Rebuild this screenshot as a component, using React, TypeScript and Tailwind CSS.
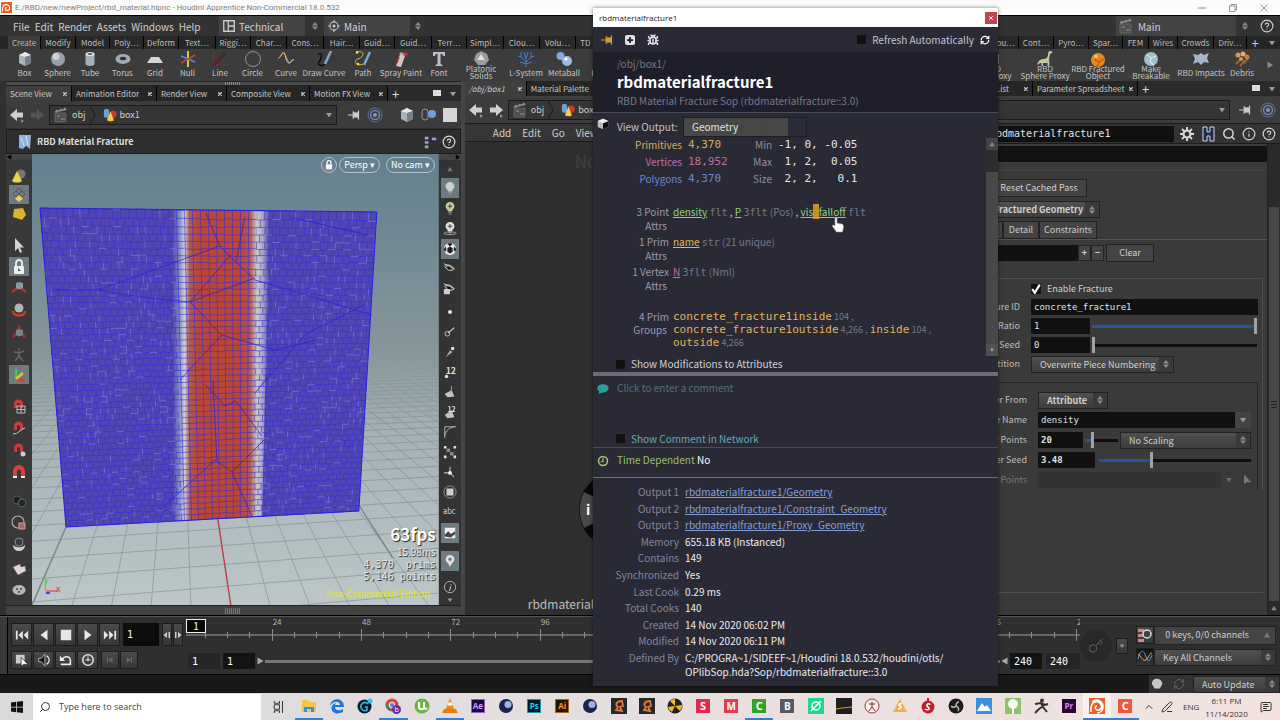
import React, { useState } from "react";
import type { ReactNode } from "react";
import { RefreshCw, Info, Key, Search, Bug, ChevronUp, CircleHelp, MessageSquareText, PenLine } from "lucide-react";

const UI = "font-['Noto_Sans_CJK_SC','Open_Sans',sans-serif]";
const MONO = "font-['DejaVu_Sans_Mono','Liberation_Mono',monospace]";
const WIN = "font-['Open_Sans','Noto_Sans',sans-serif]";

type P = { children?: ReactNode; className?: string };

function Ico({ children, className = "size-4" }: P) {
  return (
    <svg viewBox="0 0 16 16" className={`shrink-0 ${className}`} fill="none" aria-hidden="true">
      {children}
    </svg>
  );
}

/* ---------- shared glyphs ---------- */
const Spin = () => (
  <Ico className="h-3 w-2">
    <path d="M8 0l6 7H2zM8 16l6-7H2z" fill="#8a8a8a" />
  </Ico>
);
const Down = ({ className = "size-2" }: P) => (
  <Ico className={className}>
    <path d="M2 4h12l-6 9z" fill="#9a9a9a" />
  </Ico>
);
const PinIcon = ({ className = "h-3 w-3.5" }: P) => (
  <Ico className={className}>
    <path d="M0 8h7M7 3v10M7 5.500h6M7 10.500h6M14 2v12" stroke="currentColor" strokeWidth="1.600" />
    <path d="M7 5h7v6H7z" fill="currentColor" />
  </Ico>
);
const Rings = () => (
  <Ico className="size-4">
    <circle cx="8" cy="8" r="7" stroke="#5f7299" />
    <circle cx="8" cy="8" r="4.500" stroke="#6e83b0" strokeWidth="1.500" />
    <circle cx="8" cy="8" r="2" fill="#7d95c8" />
  </Ico>
);
const Gear = () => (
  <Ico className="size-3.5">
    <circle cx="8" cy="8" r="4" stroke="#d8d8d8" strokeWidth="2.500" />
    <path d="M8 0v4M8 12v4M0 8h4M12 8h4M2.300 2.300l3 3M10.700 10.700l3 3M2.300 13.700l3-3M10.700 5.300l3-3" stroke="#d8d8d8" strokeWidth="2.200" />
  </Ico>
);
const Clapper = () => (
  <Ico className="size-4">
    <path d="M2 6h11v9H2z" fill="#4c5050" stroke="#777" strokeWidth=".6" />
    <path d="M2 5l11-3M3 3l2 2M7 2l2 2M11 1l2 2" stroke="#8a8f8f" strokeWidth="1.500" />
    <path d="M4 9h3M8 12h4" stroke="#999" />
  </Ico>
);
const Shapes = () => (
  <Ico className="size-3.5">
    <rect x="1" y="1" width="6" height="10" rx="2" fill="#6f9fd4" />
    <circle cx="11.500" cy="7" r="4.200" fill="#c8372c" />
    <path d="M8.500 4l4 10c-2 1.500-6 1.500-8 0z" fill="#f2cf45" />
  </Ico>
);
const Arrow = ({ flip = false, dim = false }: { flip?: boolean; dim?: boolean }) => (
  <Ico className="size-4">
    <path d={flip ? "M15 8L8 2v3.500H2v5h6V14z" : "M1 8l7-6v3.500h6v5H8V14z"} fill={dim ? "#555" : "#d0d0d0"} />
    {!dim && <path d="M12 12l3 2-3 2z" fill="#888" />}
  </Ico>
);

/* ---------- shelf ---------- */
const tabsLeft: [string, string][] = [
  ["Create", "w-[33px]"], ["Modify", "w-[35px]"], ["Model", "w-[34px]"], ["Poly…", "w-[34px]"], ["Deform", "w-[35px]"],
  ["Text…", "w-[37px]"], ["Riggi…", "w-[35px]"], ["Char…", "w-[36px]"], ["Cons…", "w-[37px]"], ["Hair…", "w-[36px]"],
  ["Guid…", "w-[35px]"], ["Guid…", "w-[37px]"], ["Terr…", "w-[35px]"], ["Simpl…", "w-[37px]"], ["Clou…", "w-[36px]"],
  ["Volu…", "w-[36px]"], ["TD …", "w-[30px]"],
];
const tabsRight: [string, string][] = [
  ["Grou…", "w-[34px]"], ["Cont…", "w-[35px]"], ["Pyro…", "w-[35px]"], ["Spar…", "w-[34px]"], ["FEM", "w-[26px]"], ["Wires", "w-[29px]"],
  ["Crowds", "w-[36px]"], ["Driv…", "w-[33px]"],
];

const G = {
  box: <><path d="M2 4l6-3 6 3v8l-6 3-6-3z" fill="#a9b2bd" /><path d="M2 4l6 2 6-2-6-3z" fill="#e4e8ec" /><path d="M8 6l6-2v8l-6 3z" fill="#76808c" /></>,
  sphere: <><circle cx="8" cy="8" r="7" fill="#98a0aa" /><circle cx="6" cy="5.500" r="3.500" fill="#d8dde2" opacity=".8" /></>,
  tube: <><path d="M3.500 3v10c0 2.500 9 2.500 9 0V3z" fill="#a4afbb" /><ellipse cx="8" cy="3" rx="4.500" ry="2" fill="#dfe5ea" /><ellipse cx="8" cy="3" rx="2.500" ry="1" fill="#59616b" /></>,
  torus: <><ellipse cx="8" cy="8" rx="7.500" ry="5" fill="#a0aab6" /><ellipse cx="8" cy="7.500" rx="3.200" ry="1.700" fill="#2f3338" /></>,
  grid: <path d="M4 6h8l4 6H0z" fill="#d3d8dc" />,
  nul: <><path d="M8 0v16" stroke="#d8c83a" strokeWidth="2" /><path d="M1 5l14 6" stroke="#4d8fe0" strokeWidth="1.500" /><path d="M1 12l14-8" stroke="#d23c34" strokeWidth="1.500" /></>,
  line: <><path d="M2 0v14h14M2 14L16 8" stroke="#7d2f35" /><path d="M2 14L13 2" stroke="#111" strokeWidth="2" /><path d="M2 14L13 2" stroke="#c44" strokeWidth=".8" /></>,
  circle: <circle cx="8" cy="8" r="7.500" stroke="#8492aa" />,
  curve: <><path d="M0 8c4-3 4-8 6-6s2 10 5 10 2-4 5-3" stroke="#e2e2e2" /><path d="M0 8L6 1l5 11 4-4" stroke="#d6903c" strokeWidth=".8" /></>,
  draw: <><path d="M2 3c6-2 3 5 1 8s3 5 6 2" stroke="#0c0c0c" strokeWidth="1.500" /><path d="M15 0L9 13" stroke="#7fa5d8" strokeWidth="2.500" /></>,
  path: <><path d="M1 1c10-2 8 5 2 7s-1 8 5 5" stroke="#d6c12f" /><circle cx="2" cy="1.500" r="1.300" fill="#ffe22e" /><circle cx="3" cy="13" r="1.300" fill="#ffe22e" /><path d="M15 1L9 14" stroke="#7fa5d8" strokeWidth="2.500" /></>,
  spray: <><path d="M3 15L7 3l5 2-4 11z" fill="#d8c3c0" /><path d="M6 3l2-2 4 2v2z" fill="#aaa" /><circle cx="13" cy="3" r="2" fill="#c4262a" /><path d="M4 12l2-6" stroke="#b33" strokeWidth="1.500" /></>,
  font: <path d="M2 1h12v4h-2c0-2-1-2-2.500-2v10l2 1v1h-7v-1l2-1V3C5 3 4 3 4 5H2z" fill="#b9bfc6" />,
  plat: <><path d="M8 0l6 3 2 6-4 5H5L1 9l2-6z" fill="#9b9b9b" /><path d="M8 3l4 6H4z" fill="#ddd" /></>,
  lsys: <path d="M8 16V8M8 11L3 6M8 11l5-5M8 8L6 1M8 8l2-7M3 6L0 5M3 6l0-5M13 6l3-1M13 6V1M8 13l-6-2M8 13l6-2" stroke="#3f7fd0" />,
  meta: <><circle cx="4.500" cy="5" r="4" fill="#86a9dc" /><circle cx="11" cy="10" r="5" fill="#9bbcea" /><circle cx="10" cy="8" r="1.500" fill="#fff" /></>,
  file: <path d="M3 2h8l3 12H4z" fill="#d9b98f" />,
  dino: <path d="M13 0c2 0 3 1 2 2l-2 1-1 6c1 3 0 6 0 6h-1.500v-3H6V15H4.500v-3C2 12 1 14 0 14c1-4 3-6 6-6s5-1 5-5c0-2 1-3 2-3z" fill="#b9c99c" />,
  orange: <><circle cx="8" cy="9" r="7" fill="#e8861d" /><path d="M8 4L5 9l4 2-2 5M9 11l5-3" stroke="#8e4a08" strokeWidth=".8" /><circle cx="6" cy="5.500" r="2" fill="#f8be6c" /></>,
  breakable: <><circle cx="8" cy="8" r="7" fill="#9fc0cb" /><path d="M4 4l4 3-1 4 4 3M8 7l5-2" stroke="#dff2f5" /></>,
  impacts: <path d="M0 3l5 1 3-2 3 2 5-2-2 5 2 5-5-1-3 3-3-3-5 2 2-5z" fill="#a8b5cf" />,
  debris: <><path d="M2 13l5-5M6 15l5-6M10 13l4-6" stroke="#9a6230" strokeWidth="2" /><circle cx="4" cy="4" r="2.500" fill="#d99a50" /><circle cx="9" cy="3" r="2.500" fill="#e3aa66" /><circle cx="13" cy="6" r="2.500" fill="#c4813c" /><circle cx="7" cy="8" r="2" fill="#d99a50" /></>,
};
const toolsLeft: [string, string, ReactNode][] = [
  ["Box", "w-[33px]", G.box], ["Sphere", "w-[33px]", G.sphere], ["Tube", "w-[32px]", G.tube], ["Torus", "w-[33px]", G.torus],
  ["Grid", "w-[32px]", G.grid], ["Null", "w-[33px]", G.nul], ["Line", "w-[32px]", G.line], ["Circle", "w-[33px]", G.circle],
  ["Curve", "w-[34px]", G.curve], ["Draw Curve", "w-[42px]", G.draw], ["Path", "w-[36px]", G.path], ["Spray Paint", "w-[40px]", G.spray],
  ["Font", "w-[36px]", G.font], ["Platonic Solids", "w-[48px]", G.plat], ["L-System", "w-[42px]", G.lsys], ["Metaball", "w-[34px]", G.meta],
  ["File", "w-[34px]", G.file],
];
const toolsRight: [string, string, ReactNode][] = [
  ["RBD Box Proxy", "w-[50px]", G.box], ["RBD Sphere Proxy", "w-[54px]", G.dino], ["RBD Fractured Object", "w-[52px]", G.orange],
  ["Make Breakable", "w-[54px]", G.breakable], ["RBD Impacts", "w-[46px]", G.impacts], ["Debris", "w-[36px]", G.debris],
];
const twoLine: Record<string, [string, string]> = {
  "Platonic Solids": ["Platonic", "Solids"], "RBD Box Proxy": ["RBD", "Box Proxy"], "RBD Sphere Proxy": ["RBD", "Sphere Proxy"],
  "RBD Fractured Object": ["RBD Fractured", "Object"], "Make Breakable": ["Make", "Breakable"],
};

function Tool({ item: [name, w, glyph] }: { item: [string, string, ReactNode] }) {
  const two = twoLine[name];
  return (
    <button className={`flex h-8 shrink-0 flex-col items-center whitespace-nowrap text-[8px] leading-[7px] text-[#c4c4c4] ${w}`}>
      <Ico className="mt-0.5 size-4">{glyph}</Ico>
      {two ? <span className="-mt-0.5">{two[0]}<br />{two[1]}</span> : <span className="mt-0.5">{name}</span>}
    </button>
  );
}

function ShelfTab({ item: [name, w], on }: { item: [string, string]; on?: boolean }) {
  return (
    <button className={`h-[13px] shrink-0 overflow-hidden whitespace-nowrap border-r border-black text-[8px] leading-[12px] ${w} ${on ? "bg-[#3c3c3c] text-[#bbb]" : "bg-[#282828] text-[#bcbcbc]"}`}>
      {name}
    </button>
  );
}

function PaneTab({ name, w, on, italic }: { name: string; w: string; on?: boolean; italic?: boolean }) {
  return (
    <div className={`flex h-[15px] shrink-0 items-center justify-between border-r border-black px-1 ${w} ${on ? "bg-[#3f3f3f]" : "bg-[#262626]"}`}>
      <button className={`whitespace-nowrap text-[8px] leading-[14px] text-[#c8c8c8] ${italic ? "italic" : ""}`}>{name}</button>
      <button aria-label={`Close ${name}`}><Ico className="size-1"><path d="M1 1l14 14M15 1L1 15" stroke="#ccc" strokeWidth="5" /></Ico></button>
    </div>
  );
}

/* ---------- viewport drawing ---------- */
function rng(seed: number) {
  let s = seed;
  return () => ((s = (s * 16807) % 2147483647) / 2147483647);
}
const lerp = (a: number, b: number, t: number) => a + (b - a) * t;
function wallPoint(u: number, v: number) {
  const vv = Math.pow(v, 0.9);
  return [lerp(lerp(40, 377, u), lerp(66, 359, u), vv), lerp(lerp(208, 212, u), lerp(527, 511, u), vv)];
}
function seg(u1: number, v1: number, u2: number, v2: number) {
  const [a, b] = wallPoint(u1, v1);
  const [c, d] = wallPoint(u2, v2);
  return `M${a.toFixed(1)} ${b.toFixed(1)}L${c.toFixed(1)} ${d.toFixed(1)}`;
}
function buildWall() {
  const r = rng(41);
  let dark = "";
  let light = "";
  const rows = 50;
  const cols = 42;
  for (let j = 0; j <= rows; j++) {
    for (let i = 0; i < cols; i++) {
      const inRed = i > 16 && i < 27;
      const v = Math.min(1, Math.max(0, j / rows + (r() - 0.5) * 0.003));
      const line = seg(i / cols, v, (i + 1) / cols, v);
      if (!inRed && r() < 0.15) light += line;
      else dark += line;
      if (j < rows) {
        const off = inRed ? 0 : (j % 2) * 0.5 + (r() - 0.5) * 0.2;
        const u = Math.max(0, (i + off) / cols);
        const vert = seg(u, v, u, Math.min(1, v + 1 / rows));
        if (!inRed && r() < 0.2) light += vert;
        else dark += vert;
      }
    }
  }
  return { dark, light };
}
const wall = buildWall();
const floor = (() => {
  let d = "";
  for (let k = -22; k < 44; k++) {
    const s = (9 + 30 * k) / 256;
    d += `M${(179 + s * 62).toFixed(1)} 329L${(179 + s * 340).toFixed(1)} 607`;
  }
  for (let n = -4; n < 48; n++) {
    const h = 1 / (0.003425 + 0.00022 * n);
    d += `M32 ${(267 + h).toFixed(1)}L445 ${(267 + h - h * 0.1).toFixed(1)}`;
  }
  return d;
})();

function Scene() {
  return (
    <svg viewBox="32 154 407 451" preserveAspectRatio="none" className="absolute inset-0 size-full" aria-hidden="true">
      <defs>
        <linearGradient id="sky" x1="0" y1="0" x2="0" y2="1">
          <stop offset="0" stopColor="#637f8e" /><stop offset=".25" stopColor="#768c95" /><stop offset=".42" stopColor="#85969b" />
          <stop offset=".62" stopColor="#a5b2b5" /><stop offset="1" stopColor="#bdc7ca" />
        </linearGradient>
        <linearGradient id="band" gradientUnits="userSpaceOnUse" x1="172" y1="0" x2="270" y2="0">
          <stop offset="0" stopColor="#4b41a4" /><stop offset=".07" stopColor="#7f86bd" /><stop offset=".13" stopColor="#cfcfd4" />
          <stop offset=".18" stopColor="#b05a50" /><stop offset=".28" stopColor="#bb4632" /><stop offset=".7" stopColor="#bb4632" />
          <stop offset=".8" stopColor="#b05a5a" /><stop offset=".87" stopColor="#cfcbc2" /><stop offset=".93" stopColor="#a5a4c2" /><stop offset="1" stopColor="#4b41a4" />
        </linearGradient>
        <linearGradient id="fade" x1="0" y1="0" x2="0" y2="1">
          <stop offset=".38" stopColor="#fff" stopOpacity="0" /><stop offset=".6" stopColor="#fff" />
        </linearGradient>
        <mask id="floorMask"><rect x="32" y="154" width="407" height="451" fill="url(#fade)" /></mask>
      </defs>
      <rect x="32" y="154" width="407" height="451" fill="url(#sky)" />
      <path d={floor} stroke="#7d898d" strokeWidth=".8" fill="none" opacity=".75" mask="url(#floorMask)" />
      <path d="M66 527L31 607M359 505L393 558" stroke="#7d8688" strokeWidth="1.400" />
      <path d="M218 519L231 605" stroke="#c8343c" strokeWidth="1.200" />
      <path d="M40 208L377 212L359 511L66 527Z" fill="#5046ae" />
      <path d="M172 209.500L270 211L262 516.500L174 521Z" fill="url(#band)" />
      <path d={wall.dark} stroke="#3029e2" strokeWidth=".8" opacity=".7" fill="none" />
      <path d={wall.light} stroke="#7d76f6" strokeWidth=".8" opacity=".8" fill="none" />
      <g stroke="#2a22d0" strokeWidth=".9" fill="none" opacity=".85">
        <path d="M206 213l14 33 16 16 19 18 35 10 82 25M220 246L98 290H48M98 290l42 7 50 5 40-46M190 302l32 33 53 15 42-10M190 302l65-24M222 335l-42 45" />
        <path d="M205 384l20 22 11-5 26 35M264 440l-32 32-17-12-55 50M232 472l20 44M290 217l78 18M245 217l-9 45M213 380l4 80M366 304l-60 30-52 60" />
      </g>
      <path d="M40 208L377 212L359 511L66 527Z" fill="none" stroke="#2420e8" />
      <path d="M45.500 590v-11" stroke="#3adf3a" /><path d="M46 591h11" stroke="#e03030" /><path d="M46 593h4" stroke="#2828c8" strokeWidth="1.500" />
    </svg>
  );
}

/* ---------- toolbars ---------- */
const magnet = <path d="M3 10V6a4.500 4.500 0 019 0v4H9V6.500a1.500 1.500 0 00-3 0V10z" fill="#cf3a3a" />;
const leftTools: [string, ReactNode, boolean, string][] = [
  ["Select objects", <><circle cx="10" cy="6" r="4.500" fill="#777" /><path d="M6 3l5 10c-2 2-8 2-10 0z" fill="#ead054" /></>, false, "mt-[6px]"],
  ["Select primitives", <><path d="M8 1l6 6-6 6-6-6zM5 4l6 6M11 4l-6 6" stroke="#555" /><path d="M8 8l4 3.500L8 15l-4-3.500z" fill="#efcf5e" /></>, true, ""],
  ["Select geometry", <path d="M3 3l9-1 3 7-4 5-9-3z" fill="#d8b52b" />, false, ""],
  ["Select", <path d="M4 1v13l3-3 2 5 2-1-2-4.500h4z" fill="#d4d4d4" />, false, "mt-3"],
  ["Secure selection", <><rect x="3" y="7" width="10" height="8" rx="1" fill="#f0f0f0" /><path d="M5 8V4a3 3 0 016 0v4" stroke="#f0f0f0" strokeWidth="1.800" /><path d="M7 9l3 3H7z" fill="#555" /></>, true, "mt-[3px]"],
  ["Move", <><path d="M8 7L1 12M8 7l7 5M8 7V3" stroke="#bf3030" strokeWidth="2.500" /><path d="M5 3l3-1 4 1v5L8 9.500 5 8z" fill="#8a9aa4" /></>, false, "mt-[2px]"],
  ["Rotate", <><path d="M2 9c0 6 12 6 12 0" stroke="#c9431f" strokeWidth="2.500" /><circle cx="8" cy="6" r="4.500" fill="#aeb4b8" /></>, false, "mt-[3px]"],
  ["Scale", <><path d="M8 7L2 13M8 7l6 6M8 7V1" stroke="#b52c2c" strokeWidth="2.500" /><path d="M5 6l3-1 4 1v5l-4 1.500L5 11z" fill="#77848c" /></>, false, "mt-[3px]"],
  ["Pose", <path d="M8 5v5l-4 5M8 10l4 5M3 6l5 1 5-2M8 2v2" stroke="#666" strokeWidth="1.600" />, false, "mt-[3px]"],
  ["Handles", <><path d="M5 12V2" stroke="#58c23c" strokeWidth="2.500" /><path d="M5 12l9 2" stroke="#d6402e" strokeWidth="2.500" /><path d="M5 12l7-6" stroke="#e8bd37" strokeWidth="2.500" /></>, true, "mt-[2px]"],
  ["Snap grid", <>{magnet}<path d="M6 8h8v7H6zM10 8v7M6 11.500h8" stroke="#bbb" /></>, false, "mt-3"],
  ["Snap curve", <>{magnet}<path d="M2 14c6 0 6-4 12-6" stroke="#ccc" /></>, false, "mt-[3px]"],
  ["Snap point", <>{magnet}<circle cx="12" cy="12" r="2.500" fill="#ccc" /></>, false, "mt-[3px]"],
  ["Snap", <><path d="M2 14V7a6 6 0 0112 0v7h-4V7.500a2 2 0 00-4 0V14z" fill="#d64040" /><path d="M2 12h4v2H2zM10 12h4v2h-4z" fill="#eee" /></>, false, "mt-[3px]"],
  ["Construction plane", <><circle cx="6" cy="7" r="4" fill="#1a1d1e" stroke="#4f5a5e" /><circle cx="11" cy="10" r="4" fill="#23272a" stroke="#5b666a" /></>, false, "mt-[10px]"],
  ["Reference", <><circle cx="7" cy="7" r="6" stroke="#aaa" strokeWidth="1.200" /><path d="M8 8h6v6H8z" fill="#a66" stroke="#d99" /></>, false, "mt-[3px]"],
  ["Snapshot", <><circle cx="8" cy="5" r="4" fill="#333c40" stroke="#889" /><path d="M2 8c0 8 12 8 12 0-3 3-9 3-12 0z" fill="#c8d2d6" /></>, false, "mt-[3px]"],
  ["Flipbook", <path d="M2 5l7-3 1 3 4-1 1 5-8 4-2-3z" fill="#d8d8d8" stroke="#a44" strokeWidth=".5" />, false, "mt-[6px]"],
  ["Render", <><ellipse cx="8" cy="7" rx="6.500" ry="5" fill="#b7b7b7" /><circle cx="6" cy="6" r="1" fill="#444" /><circle cx="10" cy="6" r="1" fill="#444" /><circle cx="8" cy="9" r="1" fill="#444" /></>, false, "mt-[2px]"],
];
const bulb = (c: string) => <><path d="M8 1a5 5 0 00-3 9l.8 2h4.400L11 10a5 5 0 00-3-9z" fill={c} /><path d="M6 13h4M6.500 15h3" stroke="#999" /></>;
const eye = <><path d="M2 5c3-3 7-2 11 3-4 3-8 2-11-3z" fill="#555" stroke="#ccc" /><circle cx="7" cy="6.500" r="2" fill="#111" /><path d="M1 2l11 5" stroke="#ddd" /></>;
const rightTools: [string, ReactNode, boolean, string][] = [
  ["Default lighting", bulb("#c9d0d2"), true, "mt-[6px]"],
  ["Normal lighting", <>{bulb("#c3cc94")}<path d="M8 3.500v5M5.500 6h5" stroke="#333" /></>, false, ""],
  ["High quality lighting", <>{bulb("#dfe4d8")}<path d="M8 3.500v5M5.500 6h5" stroke="#333" /><ellipse cx="8" cy="14" rx="7" ry="1.500" stroke="#aaa" /></>, false, ""],
  ["Materials", <><circle cx="8" cy="8" r="7" fill="#e4e4e4" /><path d="M8 5l3 2v4l-3 2-3-2V7zM8 1l3 1-3 3-3-3zM1 8l2-3 1 4-2 2zM15 8l-2-3-1 4 2 2z" fill="#1e1e1e" /></>, true, "mt-px"],
  ["Display options", eye, false, ""],
  ["Lock display", <>{eye}<rect x="1" y="8" width="7" height="6" rx="1" fill="#ccc" /></>, false, ""],
  ["Points", <circle cx="8" cy="8" r="2.300" fill="#e2e2e2" />, false, "mt-[3px]"],
  ["Point normals", <><circle cx="5" cy="10" r="2.700" stroke="#ccc" /><path d="M6 9l7-6" stroke="#ddd" strokeWidth="1.300" /></>, false, ""],
  ["Point trails", <><circle cx="11" cy="4" r="2" fill="#ddd" /><path d="M3 14l5-8 3 2z" fill="#aaa" /></>, false, ""],
  ["Point numbers", <><text x="3" y="10" fontSize="10" fontWeight="bold" fill="#ddd">12</text><circle cx="4" cy="13" r="2" fill="#ddd" /></>, false, ""],
  ["Primitive normals", <><path d="M2 10l8-4 3 7-8 1z" fill="#c4c4c4" /><path d="M9 9l1-8" stroke="#aaa" /></>, false, ""],
  ["Primitive numbers", <><path d="M2 11l8-5 3 8-8 1z" fill="#c4c4c4" /><text x="5" y="8" fontSize="8" fontWeight="bold" fill="#ddd">12</text></>, false, ""],
  ["Profiles", <path d="M2 15V2h13M2 12C3 6 8 3 13 2" stroke="#bbb" />, false, ""],
  ["Hulls", <><path d="M4 4h4v4H4zM8 8h4v4H8z" fill="#888" /><path d="M1 1h3v3H1zM12 1h3v3h-3zM1 12h3v3H1zM12 12h3v3h-3z" fill="#ddd" /></>, false, ""],
  ["Tangents", <><path d="M8 9V2M8 9l5 5M8 9l-7 0" stroke="#bbb" strokeWidth="1.200" /><circle cx="8" cy="9" r="2.200" fill="#eee" /></>, false, ""],
  ["Background", <><circle cx="8" cy="8" r="7" stroke="#999" /><path d="M4 4h8v8H4z" fill="#ccc" /></>, false, ""],
  ["Labels", <text x="0" y="10.500" fontSize="8.500" fill="#d0d0d0">abc</text>, false, ""],
  ["Image", <><path d="M2 2h12v12H2z" fill="#eee" /><path d="M2 10l4-4 3 3 5-3v3L9 13 2 12z" fill="#444" /></>, true, "mt-[1px]"],
  ["Visualizers", <path d="M8 1a5 5 0 00-5 5c0 3 4 5 5 9 1-4 5-6 5-9a5 5 0 00-5-5zm0 3a2 2 0 110 4 2 2 0 010-4z" fill="#e0e0e0" />, true, "mt-[8px]"],
  ["Info", <><circle cx="8" cy="8" r="6.500" stroke="#bbb" /><text x="6" y="12" fontSize="10" fontStyle="italic" fill="#ddd">i</text></>, false, "mt-[6px]"],
];

/* ---------- form bits ---------- */
function Select({ label, value, className = "", bold }: { label: string; value: string; className?: string; bold?: boolean }) {
  return (
    <div className={`flex h-[17px] items-center border border-[#222] bg-linear-to-b from-[#505050] to-[#3d3d3d] ${className}`}>
      <select aria-label={label} className={`h-full min-w-0 flex-1 appearance-none pl-2 text-[9px] leading-[15px] text-[#cfcfcf] outline-none ${bold ? "font-bold" : ""}`}>
        <option>{value}</option>
      </select>
      <span className="pointer-events-none flex h-full w-3.5 items-center justify-center bg-[#3a3a3a]"><Spin /></span>
    </div>
  );
}
function Field({ id, value, className = "", bold }: { id: string; value: string; className?: string; bold?: boolean }) {
  return <input id={id} aria-label={id} defaultValue={value} className={`h-4 min-w-0 bg-[#111] px-[3px] text-[9px] text-[#e2e2e2] outline-none ${MONO} ${bold ? "font-bold" : ""} ${className}`} />;
}
function Slider({ label, value, className = "" }: { label: string; value: number; className?: string }) {
  const [v, setV] = useState(value);
  return (
    <div className={`relative flex h-4 items-center ${className}`}>
      <div className="absolute inset-x-0 h-[3px] bg-[#0e0e0e]"><div className="h-full bg-[#23549c]" style={{ width: `${v}%` }} /></div>
      <input
        type="range" aria-label={label} value={v} onChange={(e) => setV(Number(e.target.value))}
        className="relative h-4 w-full appearance-none bg-transparent [&::-webkit-slider-thumb]:h-4 [&::-webkit-slider-thumb]:w-[3px] [&::-webkit-slider-thumb]:appearance-none [&::-webkit-slider-thumb]:bg-[#a2a2a2]"
      />
    </div>
  );
}
function Row({ id, label, children, dim, inner }: { id?: string; label: string; children: ReactNode; dim?: boolean; inner?: boolean }) {
  return (
    <div className="flex h-5 items-center gap-[11px]">
      <label htmlFor={id} className={`shrink-0 whitespace-nowrap text-right text-[9px] leading-[16px] ${inner ? "w-[137px]" : "w-[130px]"} ${dim ? "text-[#777]" : "text-[#bdbdbd]"}`}>{label}</label>
      <div className="flex min-w-0 flex-1 items-center">{children}</div>
    </div>
  );
}

/* ---------- panes ---------- */
function PathBar({ children }: P) {
  return (
    <div className="flex h-5 min-w-0 flex-1 items-center gap-[3px] border border-[#1a1a1a] bg-[#353535] px-[3px] text-[9px] leading-[16px] text-[#d0d0d0]">
      <Clapper /><span>obj</span>
      <svg viewBox="0 0 6 18" className="mr-1 ml-px h-[18px] w-1.5" fill="none"><path d="M0 0l5 9-5 9" stroke="#1a1a1a" /></svg>
      <Shapes /><span>box1</span>
      <span className="flex-1" />{children}
    </div>
  );
}

function ScenePane() {
  return (
    <section className="flex w-[36%] shrink-0 flex-col pl-1.5">
      <div className="flex h-[5px] items-center justify-center border-y border-[#222] bg-[#4a4a4a]"><span className="h-[3px] w-4 bg-[repeating-linear-gradient(90deg,#888_0_1px,transparent_1px_2px)]" /></div>
      <div className="flex h-[15px] bg-[#2b2b2b]">
        <PaneTab name="Scene View" w="w-[66px]" on /><PaneTab name="Animation Editor" w="w-[85px]" /><PaneTab name="Render View" w="w-[70px]" />
        <PaneTab name="Composite View" w="w-[83px]" /><PaneTab name="Motion FX View" w="w-[78px]" />
        <button aria-label="Add tab" className="px-1 text-[13px] leading-[13px] text-[#ddd]">+</button>
        <span className="flex-1" />
        <span className="mt-1 mr-2 h-1.5 w-2 bg-[#ddd]" /><Down className="mt-1 mr-1 size-2" />
      </div>
      <div className="flex h-[27px] items-center gap-1 bg-[#3c3c3c] pl-[3px]">
        <Arrow /><Arrow flip dim />
        <PathBar><Down /></PathBar>
        <span className="flex items-center gap-1.5 pl-1.5 pr-1 text-[#ccc]">
          <PinIcon /><Rings /><span className="w-1" />
          <Ico className="size-4">{G.box}</Ico>
          <Ico className="size-4"><rect x="1" y="2" width="6" height="11" rx="3" stroke="#999" /><circle cx="11" cy="7" r="4" fill="#6aa0e0" /></Ico>
          <span className="size-3.5 bg-[#d5d5d5]" />
        </span>
      </div>
      <div className="mt-px flex h-[25px] items-center gap-1 border border-[#1c1c1c] bg-[#2e2e2e] pl-2.5 pr-1">
        <Ico className="size-4"><path d="M2 1h12l-1 14-4-3-3 3-4-1z" fill="#8fb0dc" /><path d="M4 3l3 9M9 2l2 9" stroke="#dbe8f8" /></Ico>
        <h2 className="flex-1 text-[9px] leading-[16px] font-bold text-[#dcdcdc]">RBD Material Fracture</h2>
        <Ico className="size-3.5"><path d="M1 2h4v3H1zM1 7h4v3H1zM1 12h4v3H1zM9 3h5v3H9z" fill="#90a8dc" /></Ico>
        <CircleHelp className="size-3.5 text-[#ddd]" strokeWidth={2} />
      </div>
      <div className="flex min-h-0 flex-1">
        <div className="flex w-[26px] shrink-0 flex-col items-center bg-[#393939]">
          <div className="h-1.5 w-full self-start bg-[#444]"><Ico className="size-1.5"><path d="M14 1v14L2 8z" fill="#050505" /></Ico></div>
          {leftTools.map(([n, g, on, m]) => (
            <button key={n} aria-label={n} className={`flex h-[19px] w-5 shrink-0 items-center justify-center ${m} ${on ? "bg-[#6d7a80]" : ""}`}><Ico className="size-4">{g}</Ico></button>
          ))}
        </div>
        <div className="relative min-w-0 flex-1 overflow-hidden">
          <Scene />
          <div className="absolute top-[3px] right-1 flex gap-1.5 text-[9px] leading-[14px] text-white">
            <button aria-label="Lock camera" className="flex size-4 items-center justify-center rounded-full border border-[#b5c1c6]">
              <Ico className="size-2.5"><path d="M3 7h10v8H3z" fill="#fff" /><path d="M5 7V4a3 3 0 016 0v3" stroke="#fff" strokeWidth="2" /></Ico>
            </button>
            <button className="-ml-1 h-4 rounded-full border border-[#b5c1c6] px-1">Persp ▾</button>
            <button className="h-4 rounded-full border border-[#b5c1c6] px-1">No cam ▾</button>
          </div>
          <div className="absolute right-[3px] bottom-1 flex flex-col items-end text-white [text-shadow:1px_1px_1px_#222]">
            <div className="text-[17px] leading-[20px] font-bold">63fps</div>
            <div className="text-[10px] leading-[15px] text-[#e6e6e6]">15.98ms</div>
            <pre className={`text-right text-[10px] leading-[12px] text-[#e4e4e4] ${MONO}`}>{"4,370  prims\n5,146 points"}</pre>
            <div className="mr-1.5 mt-1 text-[9px] leading-[14px] text-[#dfe620] [text-shadow:none]">Non-Commercial Edition</div>
          </div>
          <span className="absolute bottom-5 left-3 text-[9px] leading-[12px] text-[#3adf3a]">y</span>
          <span className="absolute bottom-2.5 left-6 text-[9px] leading-[12px] text-[#e03030]">x</span>
        </div>
        <div className="flex w-[22px] shrink-0 flex-col items-center bg-[#333]">
          <div className="flex h-1.5 w-full justify-end bg-[#444]"><Ico className="size-1.5"><path d="M2 1v14l12-7z" fill="#050505" /></Ico></div>
          <Ico className="mt-1.5 size-1.5"><path d="M8 2l7 12H1z" fill="#777" /></Ico>
          {rightTools.map(([n, g, on, m]) => (
            <button key={n} aria-label={n} className={`flex h-5 w-[18px] shrink-0 items-center justify-center ${m} ${on ? "bg-[#6d7a80]" : ""}`}><Ico className="size-3.5">{g}</Ico></button>
          ))}
          <Down className="size-1.5" />
        </div>
      </div>
      <div className="flex h-2.5 items-center justify-center border-t border-[#222] bg-[#424242]"><span className="h-1.5 w-4 bg-[repeating-linear-gradient(90deg,#777_0_1px,transparent_1px_2px)]" /></div>
    </section>
  );
}

function NetworkPane() {
  return (
    <section className="flex min-w-0 flex-1 flex-col border-l-4 border-[#454545]">
      <div className="flex h-[15px] bg-[#2b2b2b]">
        <PaneTab name="/obj/box1" w="w-[62px]" on italic /><PaneTab name="Material Palette" w="w-[80px]" />
      </div>
      <div className="flex h-[27px] items-center gap-1 bg-[#3c3c3c] pl-[3px]"><Arrow /><Arrow flip /><PathBar /></div>
      <div className="flex h-[19px] items-center gap-[11px] border-y border-[#1c1c1c] bg-[#363636] pl-7 text-[10px] leading-[17px] text-[#cfcfcf]">
        <a href="#add">Add</a><a href="#edit">Edit</a><a href="#go">Go</a><a href="#view">View</a>
      </div>
      <div className="relative flex-1 bg-[#2f2f2f]">
        <div className="absolute top-1.5 left-[110px] whitespace-nowrap text-[17px] leading-[26px] text-[#404040]">Non-Commercial Edition</div>
        <svg viewBox="0 0 80 80" className="absolute bottom-[65px] left-[113px] size-20" aria-hidden="true">
          <circle cx="40" cy="40" r="32" fill="none" stroke="#080808" strokeWidth="14" />
          <path d="M6 22a40 40 0 000 36l12-6a26 26 0 010-24z" fill="#484848" />
          <text x="8" y="45" fontSize="14" fontWeight="bold" fill="#fff">i</text>
        </svg>
        <div className="absolute bottom-0.5 left-[63px] text-[12px] leading-[18px] text-[#bdbdbd]">rbdmaterialfracture1</div>
      </div>
    </section>
  );
}

const pushBtn = "border border-[#222] bg-[#444]";

function ParamPane() {
  return (
    <section className="flex w-[400px] shrink-0 flex-col bg-[#3a3a3a]">
      <div className="flex h-[15px] bg-[#2b2b2b]">
        <span className="w-[60px]" /><PaneTab name="Take" w="w-[52px]" /><PaneTab name="List" w="w-[41px]" /><PaneTab name="Parameter Spreadsheet" w="w-[105px]" />
        <button aria-label="Add tab" className="px-1 text-[13px] leading-[13px] text-[#ddd]">+</button>
        <span className="flex-1" /><span className="mt-1 mr-2 h-1.5 w-2 bg-[#ddd]" /><Down className="mt-1 mr-1 size-2" />
      </div>
      <div className="flex h-[27px] items-center gap-2 bg-[#3c3c3c] pr-1 text-[#ccc]">
        <PathBar><Down /></PathBar><PinIcon /><Rings />
      </div>
      <div className="flex h-[21px] items-center gap-1.5 border-y border-[#1c1c1c] bg-[#333] pr-1 text-[#d5d5d5]">
        <span className="w-[101px]" />
        <Field id="node-name" value="rbdmaterialfracture1" className="flex-1 text-[10px]" />
        <Gear />
        <Ico className="size-4"><path d="M3 1h4v5h3V1h4v14h-4v-5H7v5H3z" fill="#1c2a4a" stroke="#cdd6ea" /></Ico>
        <Search className="size-3.5 -scale-x-100 -scale-y-100 rotate-180" strokeWidth={2.500} /><Info className="size-3.5" /><CircleHelp className="size-3.5" />
      </div>
      <div className="flex min-h-0 flex-1">
        <div className="min-w-0 flex-1 border-r border-[#222] pt-0.5">
          <div className="h-4 bg-[#121212]" />
          <div className="mt-2 flex border-t border-[#454545] pt-2 pl-[115px]">
            <button className={`h-[18px] w-[92px] pr-1 text-[9px] leading-[16px] text-[#cfcfcf] ${pushBtn}`}>Reset Cached Pass</button>
          </div>
          <Select label="Output" value="Fractured Geometry" className="mt-1 ml-[105px] w-[115px]" bold />
          <div className="mt-[3px] flex border-b border-[#555] pl-[60px] text-[9px] leading-[16px] text-[#c8c8c8]">
            <button className={`w-[63px] ${pushBtn}`}>Primary</button>
            <button className={`w-9 ${pushBtn}`}>Detail</button>
            <button className={`w-[58px] ${pushBtn}`}>Constraints</button>
          </div>
          <div className="mt-1 flex h-[18px] items-center pl-20 text-[9px] text-[#cfcfcf]">
            <Field id="group" value="" className="w-[118px]" />
            <button className={`h-4 w-[13px] leading-[14px] font-bold ${pushBtn}`}>+</button>
            <button className={`h-4 w-[13px] leading-[14px] font-bold ${pushBtn}`}>−</button>
            <button className={`ml-0.5 h-[18px] w-12 leading-[16px] ${pushBtn}`}>Clear</button>
          </div>
          <div className="mt-4 mr-1 border-t border-r border-[#505050] pl-2.5">
            <Row label="">
              <input id="enable" type="checkbox" defaultChecked className="peer sr-only" />
              <label htmlFor="enable" className="flex items-center gap-1.5 text-[9px] leading-[16px] text-[#cfcfcf]">
                <Ico className="size-2.5 bg-[#111]"><path d="M2 8l4 6 8-13" stroke="#fff" strokeWidth="3.500" /></Ico>Enable Fracture
              </label>
            </Row>
            <div className="-mt-0.5"><Row id="fid" label="Fracture ID"><Field id="fid" value="concrete_fracture1" className="mr-1 flex-1" /></Row></div>
            <div className="-mt-px"><Row id="ratio" label="Fracture Ratio"><Field id="ratio" value="1" className="w-[59px]" /><Slider label="Fracture Ratio slider" value={100} className="mx-0.5 mr-[5px] flex-1" /></Row></div>
            <div className="-mt-px"><Row id="seed" label="Random Seed"><Field id="seed" value="0" className="w-[59px]" /><Slider label="Random Seed slider" value={0} className="mx-0.5 mr-[5px] flex-1" /></Row></div>
            <div className="-mt-px"><Row label="Partition"><Select label="Partition" value="Overwrite Piece Numbering" className="w-[143px]" /></Row></div>
            <div className="mt-2 mr-1 mb-[102px] rounded-tr-sm border-t border-r border-[#252525] pt-[7px]">
              <Row label="Scatter From" inner><Select label="Scatter From" value="Attribute" className="w-[70px]" bold /></Row>
              <Row id="attr" label="Attribute Name" inner>
                <Field id="attr" value="density" className="flex-1" /><span className="mr-1.5 flex h-4 w-4 items-center justify-center bg-[#444]"><Down /></span>
              </Row>
              <Row id="pts" label="Scatter Points" inner>
                <Field id="pts" value="20" className="w-[45px]" bold /><Slider label="Points slider" value={20} className="mx-0.5 w-[33px]" />
                <Select label="Scaling" value="No Scaling" className="mr-1.5 flex-1" />
              </Row>
              <Row id="sseed" label="Scatter Seed" inner><Field id="sseed" value="3.48" className="w-[57px]" bold /><Slider label="Scatter Seed slider" value={34} className="mr-1.5 ml-1 flex-1" /></Row>
              <Row id="ipts" label="Input Points" dim inner>
                <input id="ipts" disabled className="h-4 min-w-0 flex-1 bg-[#333]" /><span className="flex w-4 justify-center opacity-50"><Down /></span>
                <Ico className="mx-1 size-3"><path d="M4 1v13l3-3h7z" fill="#777" /></Ico>
              </Row>
            </div>
          </div>
          <div className="mr-1 border-b border-[#505050]" />
        </div>
        <div className="flex w-3 flex-col items-center bg-[#2a2a2a] pt-[63px]">
          <div className="flex w-2.5 flex-1 items-center justify-center bg-[#484848]"><span className="h-2 w-1.5 bg-[repeating-linear-gradient(0deg,#222_0_1px,transparent_1px_3px)]" /></div>
          <Ico className="my-1 size-1.5"><path d="M8 2l7 12H1z" fill="#888" /></Ico>
        </div>
      </div>
    </section>
  );
}

/* ---------- info window ---------- */
const infoRows: [string, string, boolean][] = [
  ["Output 1", "rbdmaterialfracture1/Geometry", true], ["Output 2", "rbdmaterialfracture1/Constraint_Geometry", true],
  ["Output 3", "rbdmaterialfracture1/Proxy_Geometry", true], ["Memory", "655.18 KB (Instanced)", false], ["Contains", "149", false],
  ["Synchronized", "Yes", false], ["Last Cook", "0.29 ms", false], ["Total Cooks", "140", false], ["Created", "14 Nov 2020 06:02 PM", false],
  ["Modified", "14 Nov 2020 06:11 PM", false], ["Defined By", "C:/PROGRA~1/SIDEEF~1/Houdini 18.0.532/houdini/otls/", false],
];
const counts: [string, string, string, string, string][] = [
  ["Primitives", "4,370", "text-[#d8ae5c]", "Min", "-1, 0, -0.05"],
  ["Vertices", "18,952", "text-[#c46ba6]", "Max", " 1, 2,  0.05"],
  ["Polygons", "4,370", "text-[#6d86cf]", "Size", " 2, 2,   0.1"],
];
const typ = `text-[#77788a] ${MONO}`;
const hl = `text-[#e2b455] ${MONO}`;

function Attr({ n, k, children }: { n: string; k: string; children: ReactNode }) {
  return (
    <div className="mb-0.5 flex gap-1">
      <div className="w-[76px] shrink-0 text-right text-[#9a9bb0]">{n}<div className="pr-0.5">{k}</div></div>
      <div>{children}</div>
    </div>
  );
}

function InfoWindow() {
  return (
    <aside role="dialog" aria-label="rbdmaterialfracture1" className="absolute top-[8px] left-[593px] z-10 w-[405px] bg-[#292a36] pb-2 text-[10px] leading-[14px] text-[#c4c4cc] shadow-[0_0_4px_#0008]">
      <header className={`flex h-[19px] items-center justify-between bg-white pr-px pl-1.5 text-[8px] text-[#222] ${WIN}`}>
        <span>rbdmaterialfracture1</span>
        <button aria-label="Close" className="flex h-3 w-3 items-center justify-center bg-[#c4434c]"><Ico className="size-1"><path d="M1 1l14 14M15 1L1 15" stroke="#fff" strokeWidth="4" /></Ico></button>
      </header>
      <div className="flex h-[25px] items-center gap-2.5 px-2">
        <PinIcon className="size-3 text-[#d99a3c]" />
        <button aria-label="New window" className="ml-0.5 flex size-2.5 items-center justify-center rounded-xs bg-[#e0e0e6]"><Ico className="size-2"><path d="M8 2v12M2 8h12" stroke="#222" strokeWidth="3.500" /></Ico></button>
        <Bug className="ml-0.5 size-3 text-[#e0e0e6]" strokeWidth={3} />
        <label className="ml-auto flex items-center gap-1.5"><input type="checkbox" className="size-[9px] appearance-none bg-[#111]" />Refresh Automatically</label>
        <RefreshCw className="-ml-1 size-2.5 text-white" strokeWidth={3} />
      </div>
      <div className="h-[61px] border-b border-[#4c4d5c] bg-[#1e1f2b] pt-[5px] pl-6 text-[#77788a]">
        <div>/obj/box1/</div>
        <h1 className="text-[15px] leading-[22px] font-bold text-white">rbdmaterialfracture1</h1>
        <div className="leading-[16px]">RBD Material Fracture Sop (rbdmaterialfracture::3.0)</div>
      </div>
      <div className="flex h-[25px] items-center pt-[3px]">
        <Ico className="mr-2 -mt-1.5 ml-1 size-3"><path d="M1 4l7-3 7 3v8l-7 3-7-3z" fill="#bbb" /><path d="M8 7l7-3v8l-7 3z" fill="#111" /><path d="M1 4l7 3 7-3-7-3z" fill="#eee" /></Ico>
        <label htmlFor="view-output" className="w-[66px]">View Output:</label>
        <select id="view-output" className="h-5 w-[124px] appearance-none border border-[#1c1d26] bg-linear-to-r from-[#474745] from-85% to-[#2b2c3a] to-85% pl-2 text-[10px] text-[#e4e4e4] outline-none"><option>Geometry</option></select>
      </div>
      <div className="flex h-[218px]">
        <div className="flex-1">
          <div className="-mt-0.5">
            {counts.map(([a, b, c, d, e]) => (
              <div key={a} className="flex h-[17px] items-center gap-1.5 pl-8">
                <span className={`w-[57px] text-right leading-[14px] ${c}`}>{a}</span>
                <span className={`w-[42px] text-[11px] leading-[14px] ${MONO} ${c}`}>{b}</span>
                <span className="w-9 text-right text-[#8d8ea3]">{d}</span>
                <pre className={`text-[11px] leading-[14px] text-[#e6e6ea] ${MONO}`}>{e}</pre>
              </div>
            ))}
          </div>
          <div className="mt-[18px]">
            <Attr n="3 Point" k="Attrs">
              <a href="#density" className="text-[#8fcf7c] underline">density</a> <span className={typ}>flt</span> , <a href="#p" className="text-[#8fcf7c] underline">P</a> <span className={typ}>3flt</span> <span className="text-[#77788a]">(Pos)</span> , <a href="#falloff" className="text-[#8fcf7c] underline">vis<span className="bg-[#c8902a] text-[#c8902a]">_</span>falloff</a> <span className={typ}>flt</span>
            </Attr>
            <Attr n="1 Prim" k="Attrs"><a href="#name" className="text-[#e2b455] underline">name</a> <span className={typ}>str</span> <span className="text-[#77788a]">(21 unique)</span></Attr>
            <Attr n="1 Vertex" k="Attrs"><a href="#n" className="text-[#c46ba6] underline">N</a> <span className={typ}>3flt</span> <span className="text-[#77788a]">(Nml)</span></Attr>
          </div>
          <div className="mt-[17px] flex gap-1 leading-[13px]">
            <div className="w-[76px] text-right text-[#9a9bb0]">4 Prim<div className="pr-0.5">Groups</div></div>
            <div className="text-[9px] text-[#77788a]">
              <div><span className={`text-[11px] ${hl}`}>concrete_fracture1inside</span> 104 ,</div>
              <div><span className={`text-[11px] ${hl}`}>concrete_fracture1outside</span> 4,266 , <span className={`text-[11px] ${hl}`}>inside</span> 104 ,</div>
              <div><span className={`text-[11px] ${hl}`}>outside</span> 4,266</div>
            </div>
          </div>
        </div>
        <div className="flex w-3 flex-col items-center bg-[#2d2d2d] text-[#888]">
          <span className="flex h-3 w-full items-center justify-center bg-[#444]"><Ico className="size-1.5"><path d="M8 2l7 12H1z" fill="#888" /></Ico></span>
          <span className="h-[22px]" /><span className="w-full flex-1 bg-[#484848]" /><span className="flex h-3 w-full items-center justify-center bg-[#505050]"><Down className="size-1.5" /></span>
        </div>
      </div>
      <label className="flex h-4 items-center gap-1.5 pl-[23px] text-[#cfcfd6]"><input type="checkbox" className="size-[9px] appearance-none bg-[#111]" />Show Modifications to Attributes</label>
      <div className="h-1 bg-[#6c6c78]" />
      <div className="flex h-[54px] pt-[5px]">
        <Ico className="mt-0.5 mr-2 ml-1 size-3"><ellipse cx="8" cy="7" rx="7.500" ry="5.500" fill="#2a9d9d" /><path d="M3 10l-1 5 6-3z" fill="#2a9d9d" /></Ico>
        <textarea aria-label="Comment" placeholder="Click to enter a comment" className="h-11 flex-1 resize-none bg-transparent leading-[14px] outline-none placeholder:text-[#56707c]" />
      </div>
      <label className="flex h-[18px] items-center gap-1.5 border-b border-[#4c4d5c] pl-[23px] text-[#65aab2]"><input type="checkbox" className="size-[9px] appearance-none bg-[#111]" />Show Comment in Network</label>
      <div className="flex h-[30px] items-start border-b border-[#6c6d7c] pt-[5px]">
        <Ico className="mt-0.5 mr-2 ml-1 size-3"><circle cx="8" cy="8" r="6" stroke="#a8c96c" strokeWidth="2" /><path d="M8 4v5H5" stroke="#a8c96c" strokeWidth="1.500" /></Ico>
        <span><span className="text-[#98bd70]">Time Dependent</span> <span className="text-white">No</span></span>
      </div>
      <dl className="grid h-[200px] content-between pt-[7px]">
        {infoRows.map(([k, v, link]) => (
          <div key={k} className="flex gap-1.5">
            <dt className="w-[86px] shrink-0 text-right text-[#84859b]">{k}</dt>
            <dd className="leading-[14px] text-[#ececf0]">
              {link ? <a href={`#${v}`} className="text-[#84a0da] underline">{v}</a> : v}
              {k === "Defined By" && <div className="leading-[13px]">OPlibSop.hda?Sop/rbdmaterialfracture::3.0</div>}
            </dd>
          </div>
        ))}
      </dl>
      <svg viewBox="0 0 12 16" className="absolute top-[209px] left-[239px] h-4 w-3" aria-hidden="true">
        <path d="M3 1.500c0-1.500 2-1.500 2 0V6l5 1c1.500.5 1.500 1.500 1.500 3L10.500 15H4.500L.5 9.500c-.5-1 .5-2 1.500-1.200L3 9z" fill="#fff" stroke="#999" strokeWidth=".6" />
      </svg>
    </aside>
  );
}

/* ---------- play bar ---------- */
const ticks = Array.from({ length: 40 }, (_, i) => (i + 1) * 6);
const playIcons: [string, string, string][] = [
  ["First frame", "M1 3h2v10H1zM9 3v10L4 8zM15 3v10l-5-5z", ""], ["Play reverse", "M12 2v12L4 8z", ""], ["Stop", "M2 2h12v12H2z", "bg-[#5d6a72]"],
  ["Play", "M4 2v12l8-6z", ""], ["Last frame", "M13 3h2v10h-2zM7 3v10l5-5zM1 3v10l5-5z", ""],
];
const btn = "flex items-center justify-center border border-[#1e1e1e] bg-linear-to-b from-[#4a4a4a] to-[#383838]";

function PlayBar() {
  return (
    <footer className="flex h-[58px] shrink-0 border-t border-[#555] bg-[#2f2f2f]">
      <div className="w-2 border-r border-black bg-[#3a3a3a]" />
      <div className="flex w-[178px] shrink-0 flex-col gap-[5px] pt-1.5 pl-[3px]">
        <div className="flex h-[23px] gap-px">
          {playIcons.map(([n, d, c]) => <button key={n} aria-label={n} className={`${btn} w-[21px] ${c}`}><Ico className="size-3.5"><path d={d} fill="#e6e6e6" /></Ico></button>)}
          <input aria-label="Current frame" defaultValue="1" className={`ml-0.5 w-9 bg-[#0c0c0c] px-1 text-[10px] text-white ${MONO}`} />
          <button aria-label="Step back" className={`${btn} ml-0.5 w-2.5`}><Ico className="size-2"><path d="M8 2v12L1 8zM11 2h3v12h-3z" fill="#ccc" /></Ico></button>
          <button aria-label="Step forward" className={`${btn} w-2.5`}><Ico className="size-2"><path d="M8 2v12l7-6zM2 2h3v12H2z" fill="#ccc" /></Ico></button>
        </div>
        <div className="flex h-[18px] gap-px">
          <button aria-label="Key settings" className={`${btn} w-[21px]`}><Ico className="size-3.5"><path d="M1 2h10v10H1z" fill="#ccc" /><path d="M7 5v10l3-2 5 0z" fill="#fff" stroke="#222" strokeWidth=".8" /></Ico></button>
          <button aria-label="Audio" className={`${btn} w-[21px]`}><Ico className="size-3.5"><path d="M2 6h3l4-5v14l-4-5H2z" fill="#111" stroke="#bbb" /><path d="M11 3c4 3 4 7 0 10" stroke="#ddd" strokeWidth="1.500" /></Ico></button>
          <button aria-label="Loop" className={`${btn} w-[21px]`}><Ico className="size-3.5"><path d="M2 13h11V9c0-6-7-6-9-2" stroke="#eee" strokeWidth="1.800" /><path d="M1 3v6h6z" fill="#eee" /></Ico></button>
          <button aria-label="Real time" className={`${btn} w-[21px]`}><Ico className="size-3.5"><circle cx="8" cy="8" r="6" stroke="#ddd" strokeWidth="1.800" /><path d="M8 4v5M5 8h6" stroke="#ddd" strokeWidth="1.300" /></Ico></button>
          <button aria-label="Previous key" className={`${btn} ml-0.5 w-[18px]`}><Ico className="size-2"><path d="M2 2h2v12H2zM13 2v12L5 8z" fill="#666" /></Ico></button>
          <button aria-label="Next key" className={`${btn} w-[18px]`}><Ico className="size-2"><path d="M12 2h2v12h-2zM3 2v12l8-6z" fill="#666" /></Ico></button>
        </div>
      </div>
      <div className="flex min-w-0 flex-1 flex-col">
        <div className="relative h-8 overflow-hidden text-[8px] leading-[10px] text-[#b5b5b5]">
          <div className="absolute inset-x-0 top-[17px] h-0.5 bg-[#666]" />
          {ticks.map((f) => (
            <div key={f} className="absolute top-0 h-6 w-4" style={{ left: `${(f - 1) * 0.4165}%` }}>
              <div className={`absolute left-0 w-px bg-[#8a8a8a] ${f % 24 ? "top-[15px] h-1.5" : "top-3 h-3"}`} />
              {f % 24 === 0 && <span className="absolute top-0 left-px">{f === 240 ? "2" : f}</span>}
            </div>
          ))}
          <div className="absolute top-0.5 left-0 h-3.5 w-5 border border-[#eee] bg-[#0a0a0a] text-center text-[10px] leading-[12px] text-white">1</div>
        </div>
        <div className={`mt-1 flex h-4 items-center text-[10px] text-white ${MONO}`}>
          <input aria-label="Range start" defaultValue="1" className="ml-0.5 h-4 w-8 bg-[#262626] px-1" />
          <input aria-label="Play start" defaultValue="1" className="ml-[3px] h-4 w-8 bg-[#141414] px-1" />
          <Ico className="ml-0.5 size-2"><path d="M1 1v14l12-7z" fill="#aaa" /></Ico>
          <div className="h-[3px] flex-1 bg-[#777]" />
          <Ico className="mr-0.5 size-2"><path d="M15 1v14L3 8z" fill="#aaa" /></Ico>
          <input aria-label="Play end" defaultValue="240" className="h-4 w-8 bg-[#141414] px-1" />
          <input aria-label="Range end" defaultValue="240" className="ml-1 h-4 w-[34px] bg-[#262626] px-1" />
        </div>
      </div>
      <div className="flex w-[200px] shrink-0 items-center pr-1">
        <button aria-label="Set key" className="flex size-8 items-center justify-center rounded-full bg-[#282828]"><Key className="size-4 text-[#606060]" strokeWidth={1.500} /></button>
        <button aria-label="Key menu" className={`${btn} ml-1 h-4 w-3`}><Down className="size-1.5" /></button>
        <div className="ml-2 flex flex-col gap-1">
          <button aria-label="Channel list" className={`${btn} size-[18px]`}><Ico className="size-4"><path d="M1 2h6v3H1zM1 7h5v3H1zM1 12h6v3H1z" fill="#c88" /><circle cx="10" cy="7" r="4" stroke="#ddd" strokeWidth="1.500" /></Ico></button>
          <button aria-label="Animation" className={`${btn} size-[18px] from-[#111] to-[#111]`}><Ico className="size-4"><path d="M1 10c3-12 6-8 8-2s4 4 6-2" stroke="#5aa0e0" /><path d="M1 5c3 2 5 8 8 6s3-7 6-7" stroke="#e0b040" /></Ico></button>
        </div>
        <div className="flex flex-1 flex-col gap-1 text-[9px] leading-[16px] text-[#cfcfcf]">
          <button className={`flex h-[19px] items-center justify-end gap-3.5 pr-1 ${pushBtn}`}>0 keys, 0/0 channels<Ico className="size-2"><path d="M8 2l6 11H2z" fill="#777" /></Ico></button>
          <Select label="Key channels" value="Key All Channels" className="w-full" />
        </div>
      </div>
    </footer>
  );
}

/* ---------- task bar ---------- */
const tile = (t: string, c: string) => <span className={`flex size-3.5 items-center justify-center text-[8px] leading-[12px] font-bold ${c}`}>{t}</span>;
const ball = (c: string, inner: string) => <Ico><circle cx="8" cy="8" r="7" fill={c} /><circle cx="10" cy="6.500" r="3.500" fill={inner} /></Ico>;
const swirl = <Ico><path d="M0 0h16v16H0z" fill="#e8622c" /><path d="M2 14c-1-8 3-11 7-10s5 7 1 8-5-4-2-4M3 4c5-4 11-1 11 5 0 4-3 6-6 6" stroke="#fff" strokeWidth="1.500" /></Ico>;
const hand = <Ico><path d="M0 0h16v16H0z" fill="#24282c" /><path d="M11 3C5 3 4 7 7 9l-2 3 6 1-2-4 3-1z" stroke="#e07a35" strokeWidth="1.800" /></Ico>;
const apps: [string, ReactNode, boolean][] = [
  ["File Explorer", <Ico><path d="M1 2h6l1 2h7v10H1z" fill="#f4c445" /><path d="M3 9h10v5h-3v-3H6v3H3z" fill="#3f8fd2" /></Ico>, true],
  ["Edge", <Ico><path d="M1 8c1-9 14-9 14 1H6c0 4 5 4 8 2v3C6 18 1 13 3 8c1-2 3-3 4-3-1 1-1 2-1 2h5c0-5-8-4-10 1z" fill="#1c78d4" /></Ico>, false],
  ["Player", <Ico><circle cx="7.500" cy="8.500" r="7" fill="#0b1d2a" /><path d="M11 6a4 4 0 10-1 6V9H8" stroke="#3ab8e8" strokeWidth="1.500" /><circle cx="13" cy="3" r="2.500" fill="#3ac0ee" /></Ico>, false],
  ["Chrome", <Ico><circle cx="7" cy="7" r="6.500" fill="#db4437" /><path d="M1 5l5 8A6.500 6.500 0 011 5z" fill="#0f9d58" /><path d="M7 13.500L11 7h2.500A6.500 6.500 0 017 13.500z" fill="#ffcd40" /><circle cx="7" cy="7" r="2.800" fill="#4a8af4" stroke="#fff" /><circle cx="11.500" cy="11.500" r="4.500" fill="#6c2a9a" /><text x="9.500" y="14" fontSize="7" fill="#fff">b</text></Ico>, true],
  ["uTorrent", <Ico><circle cx="8" cy="8" r="7.500" fill="#6cb33f" /><path d="M5 4v5c0 3 5 3 5 0V4M10 9c0 2 2 2 3 1" stroke="#fff" strokeWidth="2" /></Ico>, false],
  ["VLC", <Ico><path d="M8 0l4.500 12h-9z" fill="#f28a1c" /><path d="M6.500 4.500h3l1 3h-5z" fill="#fff" /><path d="M2 11h12l2 4H0z" fill="#e87a10" /></Ico>, true],
  ["After Effects", tile("Ae", "bg-[#1f0740] text-[#c9a0ff] border border-[#8a60c8]"), false],
  ["Cinema 4D", ball("#1a2350", "#9fb4dc"), false],
  ["Photoshop", tile("Ps", "bg-[#001d26] text-[#31c5f0] border border-[#2a8aa8]"), false],
  ["Illustrator", tile("Ai", "bg-[#2a1400] text-[#ff9a1c] border border-[#a86414]"), false],
  ["Cinema 4D Lite", ball("#1a2350", "#9fb4dc"), false],
  ["Character", hand, false], ["Character 2", hand, false],
  ["Nuke", <Ico><circle cx="8" cy="8" r="7.500" fill="#222" /><path d="M8 8L3 3a7 7 0 015-2zM8 8l7-1a7 7 0 01-2 6zM8 8l-3 6a7 7 0 01-4-5z" fill="#f2b635" /></Ico>, false],
  ["Substance", tile("S", "bg-[#e2284c] text-white text-[11px]"), false], ["Marvelous", tile("M", "bg-[#e5394d] text-white text-[10px]"), false],
  ["Camtasia", tile("C", "bg-[#2fa52c] text-white text-[11px]"), true], ["Bridge", tile("B", "bg-[#565b64] text-white text-[10px]"), false],
  ["Paint", <Ico><path d="M0 0h16v16H0z" fill="#21d694" /><path d="M3 13L13 3M8 4a4 4 0 010 8 4 4 0 010-8" stroke="#fff" strokeWidth="1.500" /></Ico>, false],
  ["Terrain", <Ico><path d="M0 0h16v16H0z" fill="#1d1f22" /><path d="M0 11l6-1 10-1" stroke="#c99c2a" /></Ico>, false],
  ["Figure", <Ico><circle cx="8" cy="8" r="7" stroke="#a33" fill="#f6eeee" /><path d="M8 4v5l-3 4M8 9l3 4M5 6h6" stroke="#822" /></Ico>, false],
  ["Sculpt", <Ico><path d="M8 1l7 13H1z" fill="#eab04a" /><path d="M10 6c-3-1-4 1-2 2s1 3-2 3" stroke="#fff" strokeWidth="1.500" /></Ico>, false],
  ["Speed", <Ico><circle cx="8" cy="9" r="6.500" fill="#c21e2c" /><path d="M10.500 6.500c-3-2-5 1-2.500 2.500s0 4-3 2" stroke="#fff" strokeWidth="1.500" /><path d="M8 0v3" stroke="#c21e2c" strokeWidth="2" /></Ico>, false],
  ["OBS", <Ico><circle cx="8" cy="8" r="7.500" fill="#1c1c1e" /><path d="M8 8c0-3 2-4 3-4M8 8c3 1 3 4 2 5M8 8c-2 2-4 1-5 0" stroke="#bbb" strokeWidth="1.500" /></Ico>, false],
  ["World Creator", <Ico><path d="M0 0h16v16H0z" fill="#3b8fd8" /><path d="M1 13l5-8 3 4 2-2 4 6z" fill="#fff" /></Ico>, false],
  ["SpeedTree", <Ico><path d="M0 0h16v16H0z" fill="#8fc06a" /><circle cx="8" cy="6" r="5" fill="#f5faf0" /><path d="M8 8v8" stroke="#fff" strokeWidth="2" /></Ico>, false],
  ["ZBrush", <Ico><circle cx="9" cy="2.500" r="2" fill="#333" /><path d="M2 6l6-1 2 4 4 5M8 5l4 2 3-1M9 9l-3 2-4 4" stroke="#333" strokeWidth="2" /></Ico>, false],
  ["Premiere", tile("Pr", "bg-[#2a0634] text-[#e088ff]"), false],
  ["Houdini", swirl, true],
  ["Recorder", tile("C", "bg-[#ee5640] text-white text-[11px]"), true],
];

function TaskBar() {
  return (
    <nav aria-label="Taskbar" className={`flex h-[27px] shrink-0 items-center bg-linear-to-r from-[#dadadd] to-[#f2e3e0] text-[9px] leading-[12px] text-[#333] ${WIN}`}>
      <button aria-label="Start" className="flex w-[33px] items-center justify-center"><Ico className="size-3"><path d="M0 2l7-1v6.500H0zM8 1l8-1v7.500H8zM0 8.500h7V15l-7-1zM8 8.500h8V16l-8-1z" fill="#111" /></Ico></button>
      <label className="flex h-[26px] w-[228px] shrink-0 items-center gap-2 self-end bg-white pl-1.5">
        <Search className="size-3 -scale-x-100 text-[#333]" />
        <input placeholder="Type here to search" className="min-w-0 flex-1 text-[9px] outline-none placeholder:text-[#444]" />
      </label>
      <button aria-label="Task view" className="flex w-[34px] justify-center"><Ico className="size-3"><path d="M3 5h7v6H3zM3 0v3h7V0M3 16v-3h7v3M14 0v16" stroke="#333" strokeWidth="1.300" /></Ico></button>
      <div className="flex h-full min-w-0 flex-1">
        {apps.map(([n, g, on]) => (
          <button key={n} aria-label={n} className={`flex min-w-0 flex-1 items-center justify-center border-b-2 ${n === "Houdini" ? "bg-[#fff8]" : ""} ${on ? "border-[#2f7fd8]" : "border-transparent"}`}>{g}</button>
        ))}
      </div>
      <div className="flex w-[141px] shrink-0 items-center">
        <ChevronUp className="ml-1 size-3" /><PenLine className="ml-1.5 size-3" />
        <span className="ml-2.5 text-[8px]">ENG</span>
        <div className="ml-1.5 text-center text-[8px] leading-[13px]">6:11 PM<br />11/14/2020</div>
        <MessageSquareText className="ml-3 size-3" />
      </div>
    </nav>
  );
}

export default function App() {
  return (
    <div className={`relative flex min-h-screen flex-col overflow-hidden bg-[#303030] text-[#ccc] ${UI}`}>
      <header className="flex h-[15px] shrink-0 items-center gap-[3px] bg-[#fbfbfb] pr-3 font-['Roboto','Open_Sans',sans-serif] text-[8px] leading-[14px] text-[#808080]">
        <span className="ml-px"><svg viewBox="0 0 16 16" className="size-[11px]" fill="none"><path d="M0 0h16v16H0z" fill="#e8622c" /><path d="M2 14c-1-8 3-11 7-10s5 7 1 8-5-4-2-4" stroke="#fff" strokeWidth="1.500" /></svg></span>
        <span className="flex-1">E:/RBD/new/newProject/rbd_material.hipnc - Houdini Apprentice Non-Commercial 18.0.532</span>
        <span className="flex items-center gap-[23px]">
          <Ico className="size-2"><path d="M0 8h16" stroke="#888" strokeWidth="2" /></Ico>
          <Ico className="size-2"><path d="M1 4h11v11H1zM4 4V1h11v11h-3" stroke="#777" strokeWidth="1.500" /></Ico>
          <Ico className="size-2"><path d="M1 1l14 14M15 1L1 15" stroke="#777" strokeWidth="1.500" /></Ico>
        </span>
      </header>
      <div className="flex h-[21px] shrink-0 items-center border-t border-black bg-[#333] pl-[13px] text-[10px] leading-[19px] text-[#cfcfcf]">
        <nav className="flex w-[206px] gap-[5px]">
          {["File", "Edit", "Render", "Assets", "Windows", "Help"].map((m) => <a key={m} href={`#${m}`}>{m}</a>)}
        </nav>
        <button className="flex h-5 w-[86px] items-center gap-1 bg-[#434343] pl-1">
          <Ico className="size-3"><path d="M1 1h14v14H1zM7 1v14M7 8h8" stroke="#ccc" strokeWidth="1.800" /></Ico>Technical
        </button>
        <span className="flex w-[19px] justify-center"><Spin /></span>
        <button className="flex h-5 w-[86px] items-center gap-1 bg-[#434343] pl-1">
          <Ico className="size-3"><circle cx="8" cy="8" r="5.500" stroke="#bbb" strokeWidth="1.500" /><circle cx="8" cy="8" r="2" fill="#ccc" /><path d="M8 0v4M8 12v4M0 8h4M12 8h4" stroke="#bbb" strokeWidth="1.500" /></Ico>Main
        </button>
        <span className="flex w-4 justify-center"><Spin /></span>
        <span className="flex-1" />
        <button className="flex h-5 w-[120px] items-center gap-1 bg-[#434343] pl-0.5"><Clapper />Main</button>
        <span className="flex w-[18px] justify-center"><Spin /></span>
        <CircleHelp className="mr-1.5 ml-1.5 size-3.5" />
      </div>
      <div className="flex h-[13px] shrink-0 bg-[#262626] pl-2">
        {tabsLeft.map((t, i) => <ShelfTab key={i} item={t} on={i === 0} />)}
        <span className="min-w-0 flex-1" />
        {tabsRight.map((t) => <ShelfTab key={t[0]} item={t} />)}
        <span className="flex w-[33px] items-center justify-around text-[13px] leading-[12px]">+<Down /></span>
      </div>
      <div className="flex h-8 shrink-0 bg-[#3c3c3c] pl-2">
        {toolsLeft.map((t) => <Tool key={t[0]} item={t} />)}
        <span className="min-w-0 flex-1" />
        {toolsRight.map((t) => <Tool key={t[0]} item={t} />)}
        <span className="flex w-5 items-center justify-center"><Ico className="size-2"><path d="M3 1v14l11-7z" fill="#888" /></Ico></span>
      </div>
      <main className="flex min-h-0 flex-1 border-b border-black"><ScenePane /><NetworkPane /><ParamPane /></main>
      <PlayBar />
      <div className="flex h-[19px] shrink-0 items-center justify-end border-t border-black bg-[#191919] text-[9px] leading-[16px] text-[#cfcfcf]">
        <div className="flex h-full w-[131px] items-center bg-[#333]">
          <Ico className="ml-0.5 size-3.5"><path d="M1 8c0-8 11-8 12 0l-3 5H4z" fill="#c8c8c8" /></Ico>
          <RefreshCw className="ml-2 size-3 text-[#666]" />
          <div className="ml-2 flex flex-1"><Select label="Update mode" value="Auto Update" className="flex-1" /></div>
        </div>
      </div>
      <TaskBar />
      <InfoWindow />
    </div>
  );
}
